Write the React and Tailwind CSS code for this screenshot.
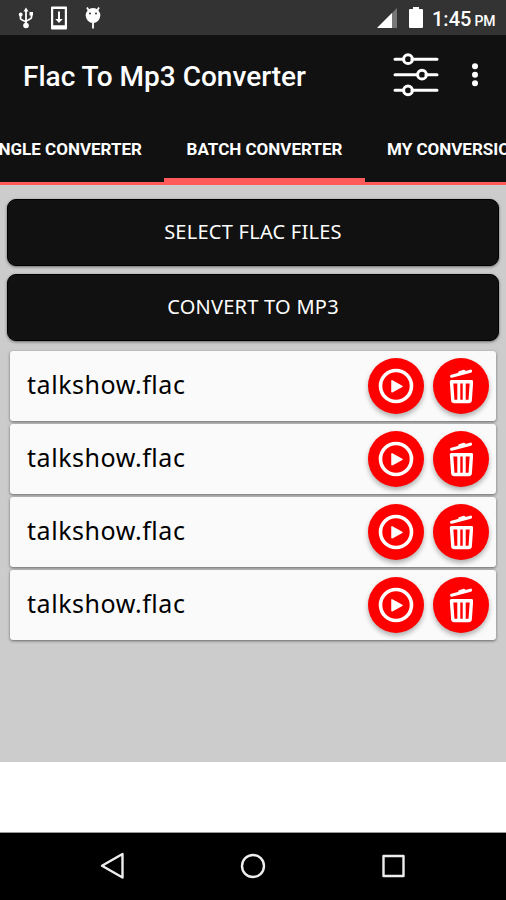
const files = [
  { id: 1, name: "talkshow.flac" },
  { id: 2, name: "talkshow.flac" },
  { id: 3, name: "talkshow.flac" },
  { id: 4, name: "talkshow.flac" },
];

const StatusBar = () => (
  <div className="flex h-[35px] items-center bg-[#333333] text-white">
    {/* USB */}
    <svg className="ml-[18px] h-[24px] w-[16px]" viewBox="0 0 16 24" fill="none" stroke="currentColor" strokeWidth="1.8">
      <path d="M8 4v15M2.5 9v3.5c0 2 5.5 2 5.5 4M13.5 8.5v3c0 2-5.5 2.5-5.5 4.5" />
      <path d="M5.5 5.5L8 1.5l2.5 4z" fill="currentColor" stroke="none" />
      <circle cx="8" cy="19.5" r="2.8" fill="currentColor" stroke="none" />
      <circle cx="2.7" cy="8.5" r="1.9" fill="currentColor" stroke="none" />
      <path d="M11.5 6h3.5v3.5h-3.5z" fill="currentColor" stroke="none" />
    </svg>
    {/* Download */}
    <svg className="ml-[17px] h-[24px] w-[16px]" viewBox="0 0 16 24">
      <path fill="currentColor" fillRule="evenodd" d="M1 .5h14a1 1 0 0 1 1 1v21a1 1 0 0 1-1 1H1a1 1 0 0 1-1-1v-21a1 1 0 0 1 1-1zM2.2 3v16.2h11.6V3z" />
      <path fill="currentColor" d="M7 5.5h2v7.5h2.8L8 17l-3.8-4H7z" />
    </svg>
    {/* Debug */}
    <svg className="ml-[18px] h-[24px] w-[16px]" viewBox="0 0 16 24">
      <path d="M3.5 4L2 1.5M12.5 4L14 1.5M8 15v7.5" stroke="currentColor" strokeWidth="1.8" />
      <ellipse cx="8" cy="9.5" rx="7.3" ry="7.5" fill="currentColor" />
      <circle cx="5" cy="7.5" r="1" fill="#333333" />
      <circle cx="11" cy="7.5" r="1" fill="#333333" />
    </svg>
    {/* Signal */}
    <svg className="ml-auto h-[20px] w-[20px]" viewBox="0 0 20 20">
      <path d="M20 0v20H0z" fill="#777777" />
      <path d="M15 5v15H0z" fill="currentColor" />
    </svg>
    {/* Battery */}
    <svg className="ml-[12px] h-[21px] w-[14px]" viewBox="0 0 14 21">
      <path d="M4 0h6v2h3a1 1 0 0 1 1 1v17a1 1 0 0 1-1 1H1a1 1 0 0 1-1-1V3a1 1 0 0 1 1-1h3z" fill="currentColor" />
    </svg>
    <div className="ml-[9px] mr-[11px] flex w-[63px] items-baseline whitespace-nowrap pt-[3px] font-medium">
      <span className="text-[20px] leading-6">1:45</span>
      <span className="ml-[3px] text-[14px]">PM</span>
    </div>
  </div>
);

const Header = () => (
  <div className="flex h-[82px] items-center pl-[23px] text-white">
    <h1 className="whitespace-nowrap pt-[2px] text-[28px] font-medium">Flac To Mp3 Converter</h1>
    <svg className="-mt-[3px] ml-auto h-[46px] w-[48px] shrink-0" viewBox="0 0 48 46" fill="none" stroke="currentColor" strokeLinecap="round">
      <path strokeWidth="3" d="M3 7.2h8M20 7.2h25M3 22.700h22M34 22.700h11M3 38.300h8M20 38.300h25" />
      <g strokeWidth="3">
        <circle cx="16" cy="7.2" r="4.4" />
        <circle cx="30" cy="22.7" r="4.4" />
        <circle cx="16" cy="38.3" r="4.4" />
      </g>
    </svg>
    <svg className="-mt-[3px] ml-[32px] mr-[28px] h-[24px] w-[6px] shrink-0" viewBox="0 0 6 24" fill="currentColor">
      <circle cx="3" cy="3.2" r="3" />
      <circle cx="3" cy="11.7" r="3" />
      <circle cx="3" cy="20.2" r="3" />
    </svg>
  </div>
);

const Tabs = () => (
  <div className="flex h-[68px] justify-center overflow-hidden border-b-[3px] border-[#ff5959] text-[17px] font-bold text-white">
    <div className="-ml-[38px] flex w-[202px] shrink-0 justify-end whitespace-nowrap pr-[22px] pt-[20px]">SINGLE CONVERTER</div>
    <div className="flex w-[201px] shrink-0 justify-center whitespace-nowrap border-b-4 border-[#ff5959] pt-[20px]">BATCH CONVERTER</div>
    <div className="w-[141px] shrink-0 overflow-hidden whitespace-nowrap pl-[22px] pt-[20px]">MY CONVERSIONS</div>
  </div>
);

const ActionButton = ({ children }) => (
  <button
    type="button"
    className="flex h-[67px] w-full items-center justify-center rounded-[9px] border border-black bg-[#111111] pb-[2px] font-['Noto_Sans'] text-[20px] tracking-[0.25px] text-white shadow-[0_1px_3px_rgba(0,0,0,0.5)]"
  >
    {children}
  </button>
);

const RoundButton = ({ label, children }) => (
  <button
    type="button"
    aria-label={label}
    className="flex h-14 w-14 items-center justify-center rounded-full bg-[#ff0000] text-white shadow-[0_3px_5px_rgba(0,0,0,0.3)]"
  >
    {children}
  </button>
);

const FileRow = ({ name }) => (
  <li className="flex h-[70px] items-center rounded-[3px] bg-[#fafafa] pl-[17px] pr-[7px] shadow-[0_1px_3px_rgba(0,0,0,0.5)]">
    <span className="flex-1 pb-[2px] font-['Noto_Sans'] text-[25px] tracking-[0.55px] text-black">{name}</span>
    <div className="flex gap-[9px]">
      <RoundButton label="Play">
        <svg className="h-9 w-9" viewBox="0 0 36 36">
          <circle cx="18" cy="18" r="15.5" fill="none" stroke="currentColor" strokeWidth="3.6" />
          <path d="M14 12.8v11l10-5.5z" fill="currentColor" stroke="currentColor" strokeWidth="1.5" strokeLinejoin="round" />
        </svg>
      </RoundButton>
      <RoundButton label="Delete">
        <svg className="h-9 w-6" viewBox="0 0 24 36" fill="none" stroke="currentColor" strokeLinecap="round" strokeLinejoin="round">
          {/* lid and handle */}
          <path strokeWidth="3.2" d="M2.6 8.2L21.5 3.2" />
          <path strokeWidth="2.6" d="M10.5 4.5l4.500-1.500 1 1.500" />
          {/* bin */}
          <path strokeWidth="3.4" d="M2.5 13.7h20l-1.3 18.500a1.500 1.500 0 0 1-1.500 1.300H5.300a1.500 1.500 0 0 1-1.500-1.300z" />
          <path strokeWidth="3" strokeLinecap="butt" d="M9.800 14v19M15.200 14v19" />
        </svg>
      </RoundButton>
    </div>
  </li>
);

const NavBar = () => (
  <div className="flex h-[68px] items-center justify-between border-t border-[#999999] bg-black px-[100px] pb-[2px] text-[#eeeeee]">
    <svg className="h-7 w-6" viewBox="0 0 24 28" fill="none" stroke="currentColor" strokeWidth="2.4" strokeLinejoin="round">
      <path d="M22.5 2v23.5L2 13.7z" />
    </svg>
    <svg className="h-7 w-7" viewBox="0 0 28 28" fill="none" stroke="currentColor" strokeWidth="2.4">
      <circle cx="14" cy="14" r="11" />
    </svg>
    <svg className="h-7 w-6" viewBox="0 0 24 28" fill="none" stroke="currentColor" strokeWidth="2.4" strokeLinejoin="round">
      <path d="M1.500 4h20v20h-20z" />
    </svg>
  </div>
);

export default function App() {
  return (
    <div className="flex h-[900px] w-[506px] flex-col overflow-hidden bg-white font-[Roboto,sans-serif]">
      <StatusBar />
      <div className="bg-[#111111]">
        <Header />
        <Tabs />
      </div>

      <main className="h-[577px] bg-[#cccccc] px-[7px] pt-[14px]">
        <div className="flex flex-col gap-[8px]">
          <ActionButton>SELECT FLAC FILES</ActionButton>
          <ActionButton>CONVERT TO MP3</ActionButton>
        </div>
        <ul className="mx-[3px] mt-[10px] flex flex-col gap-[3px]">
          {files.map((file) => (
            <FileRow key={file.id} name={file.name} />
          ))}
        </ul>
      </main>

      <div className="flex-1 bg-white" />
      <NavBar />
    </div>
  );
}
